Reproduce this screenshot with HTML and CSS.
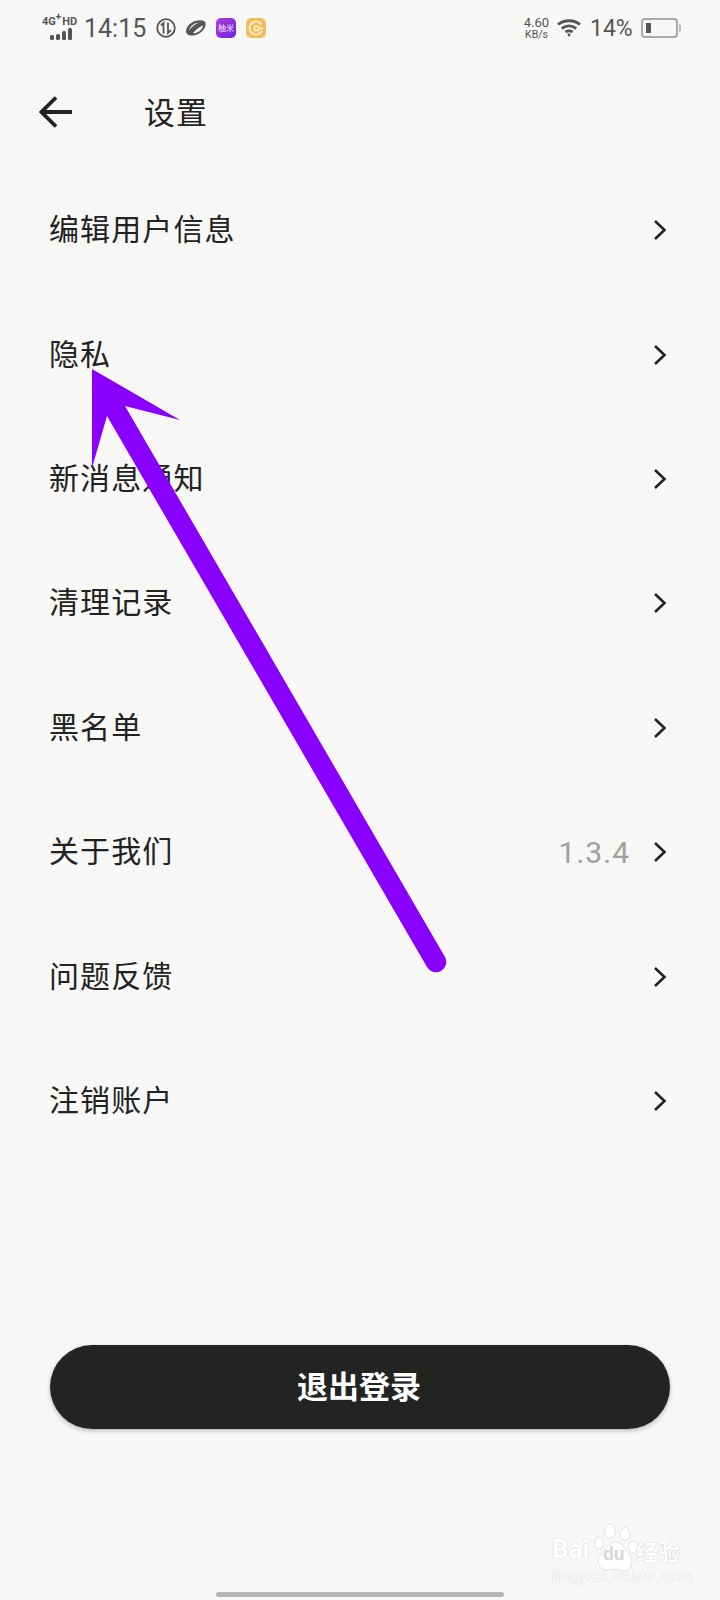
FILE: index.html
```html
<!DOCTYPE html>
<html lang="zh-CN">

<head>
  <meta charset="utf-8">
  <meta name="viewport" content="width=device-width, initial-scale=1">
  <title>设置</title>
  <link rel="stylesheet" href="styles.css">
</head>

<body>
  <div class="page">
    <!-- Status bar -->
    <div class="status">
      <div class="net">
        <div class="net-text">4G<sup>+</sup>HD</div>
        <svg class="net-bars" width="24" height="12" viewBox="0 0 24 12">
          <rect x="1" y="7" width="4" height="5" rx="1.5" />
          <rect x="7" y="6" width="4" height="6" rx="1.5" />
          <rect x="13" y="3" width="4" height="9" rx="1.5" />
          <rect x="19" y="0" width="4" height="12" rx="1.5" />
        </svg>
      </div>
      <div class="time">14:15</div>
      <svg class="app-icon" width="20" height="20" viewBox="0 0 20 20" fill="none" stroke="#555" stroke-width="1.8">
        <circle cx="10" cy="10" r="8.8" />
        <path d="M7.500 15.500V5L5 7.500M12 4.500V15l3-2.800" />
      </svg>
      <svg class="app-icon" width="20" height="20" viewBox="0 0 20 20" fill="#555">
        <path d="M18 3c2 1.500 2 4 1 6-2 5-8 9-13 8.500-4 0-6.500-2-5.800-5.500C1 8 5 4 10 2.800c3-.7 6-1 8 .2zM13 4.500C8.500 5 4 8 3 12.500 6 8.500 9.500 6 13 4.500zM17 7.500c-3.500 1.200-7.500 4-10 7.800 5 0 9.500-3.500 10-7.800z" />
      </svg>
      <div class="app-purple">柚米</div>
      <svg class="app-icon" width="20" height="20" viewBox="0 0 20 20" fill="none">
        <rect width="20" height="20" rx="5" fill="#eec05c" />
        <path d="M15.500 6.500A6.500 6.500 0 1 0 16 12.500" stroke="#fbf3d8" stroke-width="1.600" />
        <circle cx="10.500" cy="10.500" r="2.300" stroke="#fbf3d8" stroke-width="1.500" />
        <path d="M12.800 10.500H17" stroke="#fbf3d8" stroke-width="1.500" />
      </svg>

      <div class="status-right">
        <div class="speed">4.60<br><span>KB/s</span></div>
        <svg class="wifi" width="24" height="18" viewBox="0 0 24 18" fill="none" stroke="#555" stroke-width="2.800">
          <path d="M1 5.500C7.500 .5 16.500 .5 23 5.500" />
          <path d="M4.800 9.500c4.400-3.200 10-3.200 14.400 0" />
          <path d="M8.500 13c2.200-1.400 4.800-1.400 7 0" />
          <circle cx="12" cy="16" r="1.400" fill="#555" stroke="none" />
        </svg>
        <div class="percent">14%</div>
        <div class="battery"><div class="battery-fill"></div></div>
      </div>
    </div>

    <!-- Title bar -->
    <div class="topbar">
      <svg class="back" width="34" height="32" viewBox="0 0 34 32" fill="none" stroke="#222" stroke-width="3.800">
        <path d="M33 16H3M17 1.500 2.500 16 17 30.500" />
      </svg>
      <div class="title">设置</div>
    </div>

    <!-- Settings list -->
    <div class="list">
      <div class="row"><span class="label">编辑用户信息</span><svg class="chevron" width="14" height="22" viewBox="0 0 14 22"><path d="M2 2l9.500 9L2 20" /></svg></div>
      <div class="row"><span class="label">隐私</span><svg class="chevron" width="14" height="22" viewBox="0 0 14 22"><path d="M2 2l9.500 9L2 20" /></svg></div>
      <div class="row"><span class="label">新消息通知</span><svg class="chevron" width="14" height="22" viewBox="0 0 14 22"><path d="M2 2l9.500 9L2 20" /></svg></div>
      <div class="row"><span class="label">清理记录</span><svg class="chevron" width="14" height="22" viewBox="0 0 14 22"><path d="M2 2l9.500 9L2 20" /></svg></div>
      <div class="row"><span class="label">黑名单</span><svg class="chevron" width="14" height="22" viewBox="0 0 14 22"><path d="M2 2l9.500 9L2 20" /></svg></div>
      <div class="row"><span class="label">关于我们</span><span class="version">1.3.4</span><svg class="chevron" width="14" height="22" viewBox="0 0 14 22"><path d="M2 2l9.500 9L2 20" /></svg></div>
      <div class="row"><span class="label">问题反馈</span><svg class="chevron" width="14" height="22" viewBox="0 0 14 22"><path d="M2 2l9.500 9L2 20" /></svg></div>
      <div class="row"><span class="label">注销账户</span><svg class="chevron" width="14" height="22" viewBox="0 0 14 22"><path d="M2 2l9.500 9L2 20" /></svg></div>
    </div>

    <button class="logout"><span class="logout-text">退出登录</span></button>

    <div class="home-bar"></div>

    <!-- Annotation arrow drawn over the list -->
    <svg class="arrow" width="720" height="1600" viewBox="0 0 720 1600">
      <path d="M92 369 180 420 125 406 445 957A10 10 0 0 1 427 967L107 416 92 468Z" fill="#8a00ff" />
    </svg>

    <!-- Watermark -->
    <div class="watermark">
      <div class="wm-top">
        <span class="wm-bai">Bai</span>
        <svg class="wm-paw" width="44" height="56" viewBox="0 0 44 56" fill="#fff" stroke="#e2e2e0" stroke-width="1">
          <ellipse cx="16" cy="9" rx="5.500" ry="7" />
          <ellipse cx="31" cy="12" rx="5" ry="6.500" />
          <ellipse cx="5" cy="21" rx="4.500" ry="6" />
          <ellipse cx="39" cy="25" rx="4.500" ry="6" />
          <path d="M22 20c7 0 8 8 13 12 5 5 4 16-5 17-5 0-6-2-9-2-3 0-5 2-10 1-8-2-9-12-3-17 5-4 6-11 14-11z" />
        </svg>
        <span class="wm-du">du</span>
        <span class="wm-cn">经验</span>
      </div>
      <div class="wm-url">jingyan.baidu.com</div>
    </div>
  </div>
</body>

</html>
```

FILE: styles.css
```css
/* Styling for the page */
body {
  margin: 0;
  background-color: #f7f7f5;
  font-family: "Noto Sans CJK SC", Roboto, sans-serif;
  color: #222;
}

.page {
  position: relative;
  width: 720px;
  height: 1600px;
  overflow: hidden;
}

/* Status bar */
.status {
  display: flex;
  align-items: center;
  height: 56px;
  padding: 0 42px;
  color: #555;
  font-family: Roboto, sans-serif;
}

.net {
  width: 36px;
  margin-right: 6px;
}

.net-text {
  font-size: 11px;
  font-weight: 700;
  line-height: 10px;
  white-space: nowrap;
}

.net-text sup {
  margin-right: 1px;
  font-size: 10px;
  line-height: 0;
}

.net-bars {
  display: block;
  margin: 1px 0 0 7px;
  fill: #555;
}

.time {
  width: 72px;
  font-size: 25px;
}

.app-icon {
  margin-right: 10px;
}

.app-purple {
  width: 20px;
  height: 20px;
  margin-right: 10px;
  border-radius: 5px;
  background: linear-gradient(135deg, #b23be0, #6a22d8);
  color: #f5e8ff;
  font-family: "Noto Sans CJK SC", sans-serif;
  font-size: 8px;
  line-height: 20px;
  text-align: center;
}

.status-right {
  display: flex;
  align-items: center;
  margin-left: auto;
}

.speed {
  width: 27px;
  margin-right: 7px;
  font-size: 13px;
  line-height: 11px;
  text-align: center;
}

.speed span {
  font-size: 10.5px;
}

.wifi {
  margin-right: 9px;
}

.percent {
  width: 51px;
  font-size: 23px;
}

.battery {
  position: relative;
  box-sizing: border-box;
  width: 37px;
  height: 20px;
  padding: 3px;
  border: 2px solid #aaa;
  border-radius: 4px;
}

.battery:after {
  position: absolute;
  content: "";
  top: 4px;
  right: -5px;
  width: 2px;
  height: 8px;
  border-radius: 0 2px 2px 0;
  background-color: #bbb;
}

.battery-fill {
  width: 5px;
  height: 100%;
  background-color: #555;
}

/* Title bar */
.topbar {
  display: flex;
  align-items: center;
  height: 112px;
  padding-left: 39px;
}

.back {
  margin-right: 71px;
}

.title {
  padding-bottom: 4px;
  font-size: 31px;
  letter-spacing: 1px;
}

/* Settings list */
.list {
  display: flex;
  flex-direction: column;
}

.row {
  display: flex;
  align-items: center;
  height: 124.4px;
  padding: 0 53px 0 49px;
}

.label {
  flex: 1;
  padding-bottom: 6px;
  font-size: 30px;
  letter-spacing: 1.1px;
}

.version {
  margin-right: 23px;
  color: #a0a0a0;
  font-family: Roboto, sans-serif;
  font-size: 30px;
  letter-spacing: 1px;
}

.chevron {
  fill: none;
  stroke: #222;
  stroke-width: 2.6;
}

.logout {
  display: block;
  width: 620px;
  height: 84px;
  margin: 182px 0 0 50px;
  padding: 0 0 6px;
  border: none;
  border-radius: 42px;
  background-color: #222421;
  box-shadow: 0 2px 4px rgba(0, 0, 0, 0.25);
  color: white;
  font-family: "Noto Sans CJK SC", sans-serif;
  font-size: 31px;
  font-weight: 700;
}

.logout-text {
  margin-left: -2px;
}

.home-bar {
  position: absolute;
  left: 216px;
  bottom: 3px;
  width: 288px;
  height: 5px;
  border-radius: 3px;
  background-color: #b5b5b5;
}

/* Overlays */
.arrow {
  position: absolute;
  top: 0;
  left: 0;
}

.watermark {
  position: absolute;
  left: 552px;
  top: 1522px;
  width: 140px;
  color: #fff;
  text-shadow: 0 0 1px #cfcfcd, 0 0 1px #cfcfcd;
}

.wm-top {
  position: relative;
  display: flex;
  align-items: flex-end;
  height: 42px;
}

.wm-bai {
  font-family: Roboto, sans-serif;
  font-size: 26px;
  font-weight: 700;
  line-height: 30px;
}

.wm-paw {
  position: absolute;
  left: 42px;
  top: 0;
}

.wm-du {
  position: absolute;
  left: 51px;
  top: 21px;
  color: #d8d8d6;
  font-family: Roboto, sans-serif;
  font-size: 19px;
  line-height: 22px;
  font-weight: 700;
  text-shadow: none;
}

.wm-cn {
  position: absolute;
  left: 84px;
  top: 14px;
  font-size: 22px;
  font-weight: 700;
  line-height: 28px;
}

.wm-url {
  margin-top: 5px;
  font-family: Roboto, sans-serif;
  font-size: 16px;
  line-height: 16px;
  letter-spacing: 0.7px;
}
```
